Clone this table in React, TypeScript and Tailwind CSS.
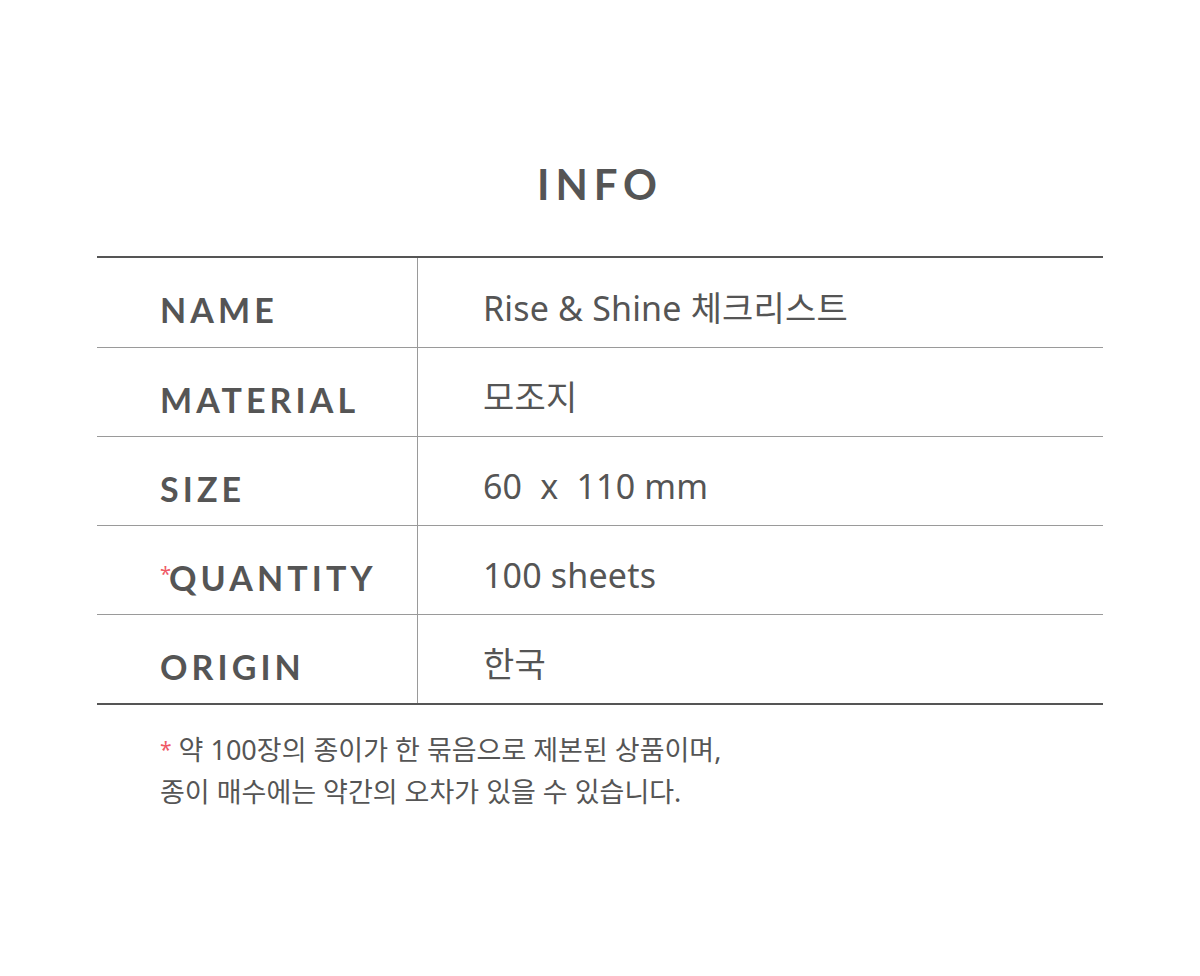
const rows: { label: string; value: string; mark?: boolean }[] = [
  { label: 'NAME', value: 'Rise & Shine 체크리스트' },
  { label: 'MATERIAL', value: '모조지' },
  { label: 'SIZE', value: '60  x  110 mm' },
  { label: 'QUANTITY', value: '100 sheets', mark: true },
  { label: 'ORIGIN', value: '한국' },
]

const labelFont = "[font-family:'Lato','Liberation_Sans',sans-serif]"

export default function App() {
  return (
    <div className="min-h-[976px] w-full bg-white text-[#555555] [font-family:'Noto_Sans','Noto_Sans_CJK_KR',sans-serif]">
      <div className="px-[97px] pt-[158px]">
        <h1 className={`${labelFont} text-center text-[42px] font-bold leading-[52px] tracking-[0.14em] text-[#555555]`}>
          INFO
        </h1>

        <div className="mt-[46px] border-t-2 border-b-2 border-[#555555]">
          {rows.map((r, i) => (
            <div
              key={r.label}
              className={`flex h-[89px] ${i > 0 ? 'border-t border-[#9a9a9a]' : ''}`}
            >
              <div className="w-[321px] shrink-0 flex items-center pl-[63px] pt-[14px] border-r border-[#9a9a9a]">
                <span className={`${labelFont} text-[34px] font-bold tracking-[0.12em] text-[#555555]`}>
                  {r.mark && (
                    <span className="relative top-[-10px] mr-[-2px] [font-family:'Noto_Sans',sans-serif] text-[20px] font-normal tracking-normal text-[#ef5a66]">*</span>
                  )}
                  {r.label}
                </span>
              </div>
              <div className="flex items-center pl-[65px] pt-[11px] text-[34px] tracking-[0.005em] whitespace-pre text-[#555555]">
                {r.value}
              </div>
            </div>
          ))}
        </div>

        <div className="pl-[63px] pt-[25px] text-[27px] leading-[40px] text-[#555555]">
          <p>
            <span className="relative top-[-3px] text-[21px] text-[#ef5a66]">*</span> 약 100장의 종이가 한 묶음으로 제본된 상품이며,
          </p>
          <p>종이 매수에는 약간의 오차가 있을 수 있습니다.</p>
        </div>
      </div>
    </div>
  )
}
